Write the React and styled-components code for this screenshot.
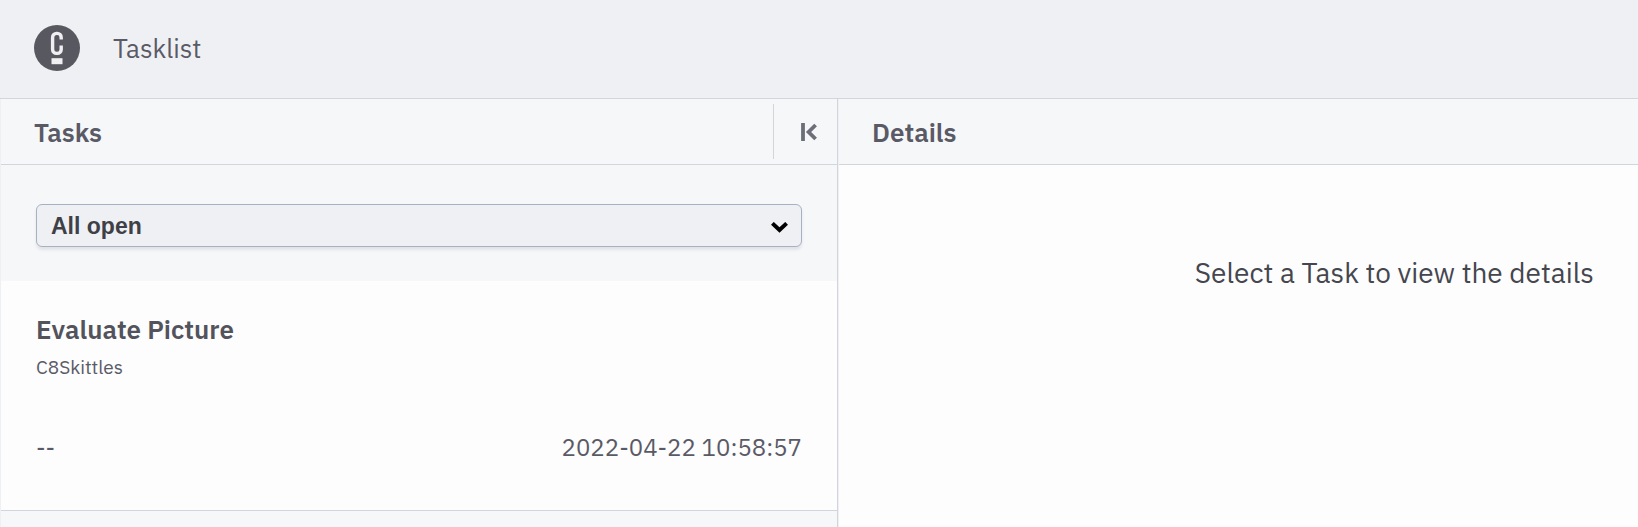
import React from 'react';
import styled, { createGlobalStyle, ThemeProvider } from 'styled-components';

const theme = {
  line: '#d2d5dc',
  bar: '#eff0f3',
  panel: '#f5f7f9',
  surface: '#fdfdfe',
  text: '#5a5a66',
  textStrong: '#45464e',
};

const GlobalStyle = createGlobalStyle`
  * { box-sizing: border-box; }
  body {
    margin: 0;
    background: ${theme.surface};
    color: ${theme.text};
    font-family: "IBM Plex Sans", "Noto Sans", sans-serif;
  }
  h1, h2, h3, p, ul { margin: 0; padding: 0; }
`;

const Page = styled.div`
  display: flex;
  flex-direction: column;
  min-height: 100vh;
`;

const TopBar = styled.header`
  display: flex;
  align-items: center;
  gap: 33px;
  padding: 25px 34px 27px;
  background: ${({ theme }) => theme.bar};
  border-bottom: 1px solid ${({ theme }) => theme.line};
`;

const HomeLink = styled.a`
  display: flex;
`;

const AppName = styled.h1`
  font-size: 26px;
  line-height: 32px;
  font-weight: 400;
`;

const Columns = styled.main`
  flex: 1;
  display: grid;
  grid-template-columns: minmax(0, 838fr) minmax(0, 800fr);
`;

const TasksPanel = styled.section`
  display: flex;
  flex-direction: column;
  background: ${({ theme }) => theme.panel};
  border-left: 1px solid ${({ theme }) => theme.bar};
  border-right: 1px solid ${({ theme }) => theme.line};
`;

const DetailsPanel = styled.section`
  background: ${({ theme }) => theme.surface};
  border-left: 1px solid ${({ theme }) => theme.bar};
`;

const PanelHeader = styled.div`
  display: flex;
  align-items: center;
  justify-content: space-between;
  height: 66px;
  padding-left: 33px;
  background: ${({ theme }) => theme.panel};
  border-bottom: 1px solid ${({ theme }) => theme.line};
`;

const PanelTitle = styled.h2`
  font-size: 26px;
  line-height: 32px;
  font-weight: 600;
`;

const CollapseButton = styled.button`
  display: flex;
  align-items: center;
  width: 64px;
  height: 55px;
  padding: 0 0 0 27px;
  border: 0;
  border-left: 1px solid ${({ theme }) => theme.line};
  background: none;
  color: #6d6e7a;
  cursor: pointer;
`;

const FilterBar = styled.div`
  padding: 39px 35px 34px;
`;

const SelectBox = styled.div`
  position: relative;
`;

const FilterSelect = styled.select`
  display: block;
  appearance: none;
  width: 100%;
  height: 43px;
  padding: 0 48px 0 14px;
  border: 1px solid #a8b1c3;
  border-radius: 6px;
  background: ${({ theme }) => theme.bar};
  box-shadow: 0 3px 3px rgba(60, 60, 70, 0.1);
  color: #3f4047;
  font: bold 23px "Liberation Sans", Arial, sans-serif;
`;

const SelectArrow = styled.svg`
  position: absolute;
  top: 18px;
  right: 14px;
  pointer-events: none;
`;

const TaskList = styled.ul`
  list-style: none;
`;

const TaskCard = styled.li`
  padding: 32px 35px 47px;
  background: ${({ theme }) => theme.surface};
  border-bottom: 1px solid ${({ theme }) => theme.line};
`;

const TaskName = styled.h3`
  font-size: 26px;
  line-height: 32px;
  font-weight: 600;
  color: #53535c;
`;

const ProcessName = styled.p`
  margin-top: 8px;
  font-size: 19px;
  line-height: 28px;
`;

const TaskMeta = styled.div`
  display: flex;
  justify-content: space-between;
  margin-top: 50px;
  font-size: 24px;
  line-height: 32px;
`;

const EmptyMessage = styled.p`
  padding: 92px 44px 0;
  text-align: right;
  font-size: 28px;
  line-height: 32px;
  color: ${({ theme }) => theme.textStrong};
`;

function Logo() {
  return (
    <svg width="46" height="46" viewBox="0 0 46 46" aria-hidden="true">
      <circle cx="23" cy="23" r="23" fill="#585861" />
      <path
        d="M27.2 14.6v-2.2a4 4 0 0 0-4-4h-.6a4 4 0 0 0-4 4v12a4 4 0 0 0 4 4h.6a4 4 0 0 0 4-4V20.6"
        fill="none"
        stroke="#f0f0f3"
        strokeWidth="3.4"
      />
      <rect x="17.5" y="33.2" width="11" height="6" fill="#f0f0f3" />
    </svg>
  );
}

function CollapseIcon() {
  return (
    <svg width="17" height="18" viewBox="0 0 17 18" fill="none" stroke="currentColor" strokeWidth="3.8" aria-hidden="true">
      <path d="M2 0v18" />
      <path d="M14.6 2L7.6 9l7 7" />
    </svg>
  );
}

export default function App() {
  return (
    <ThemeProvider theme={theme}>
      <GlobalStyle />
      <Page>
        <TopBar>
          <HomeLink href="#" aria-label="Home">
            <Logo />
          </HomeLink>
          <AppName>Tasklist</AppName>
        </TopBar>
        <Columns>
          <TasksPanel>
            <PanelHeader>
              <PanelTitle>Tasks</PanelTitle>
              <CollapseButton type="button" aria-label="Collapse tasks">
                <CollapseIcon />
              </CollapseButton>
            </PanelHeader>
            <FilterBar>
              <SelectBox>
                <FilterSelect aria-label="Filter tasks" defaultValue="all-open">
                  <option value="all-open">All open</option>
                </FilterSelect>
                <SelectArrow width="17" height="12" viewBox="0 0 17 12" fill="none" stroke="#000" strokeWidth="4" aria-hidden="true">
                  <path d="M1.4 1.4L8.5 8L15.6 1.4" />
                </SelectArrow>
              </SelectBox>
            </FilterBar>
            <TaskList>
              <TaskCard>
                <TaskName>Evaluate Picture</TaskName>
                <ProcessName>C8Skittles</ProcessName>
                <TaskMeta>
                  <span>--</span>
                  <time dateTime="2022-04-22T10:58:57">2022-04-22 10:58:57</time>
                </TaskMeta>
              </TaskCard>
            </TaskList>
          </TasksPanel>
          <DetailsPanel>
            <PanelHeader>
              <PanelTitle>Details</PanelTitle>
            </PanelHeader>
            <EmptyMessage>Select a Task to view the details</EmptyMessage>
          </DetailsPanel>
        </Columns>
      </Page>
    </ThemeProvider>
  );
}
